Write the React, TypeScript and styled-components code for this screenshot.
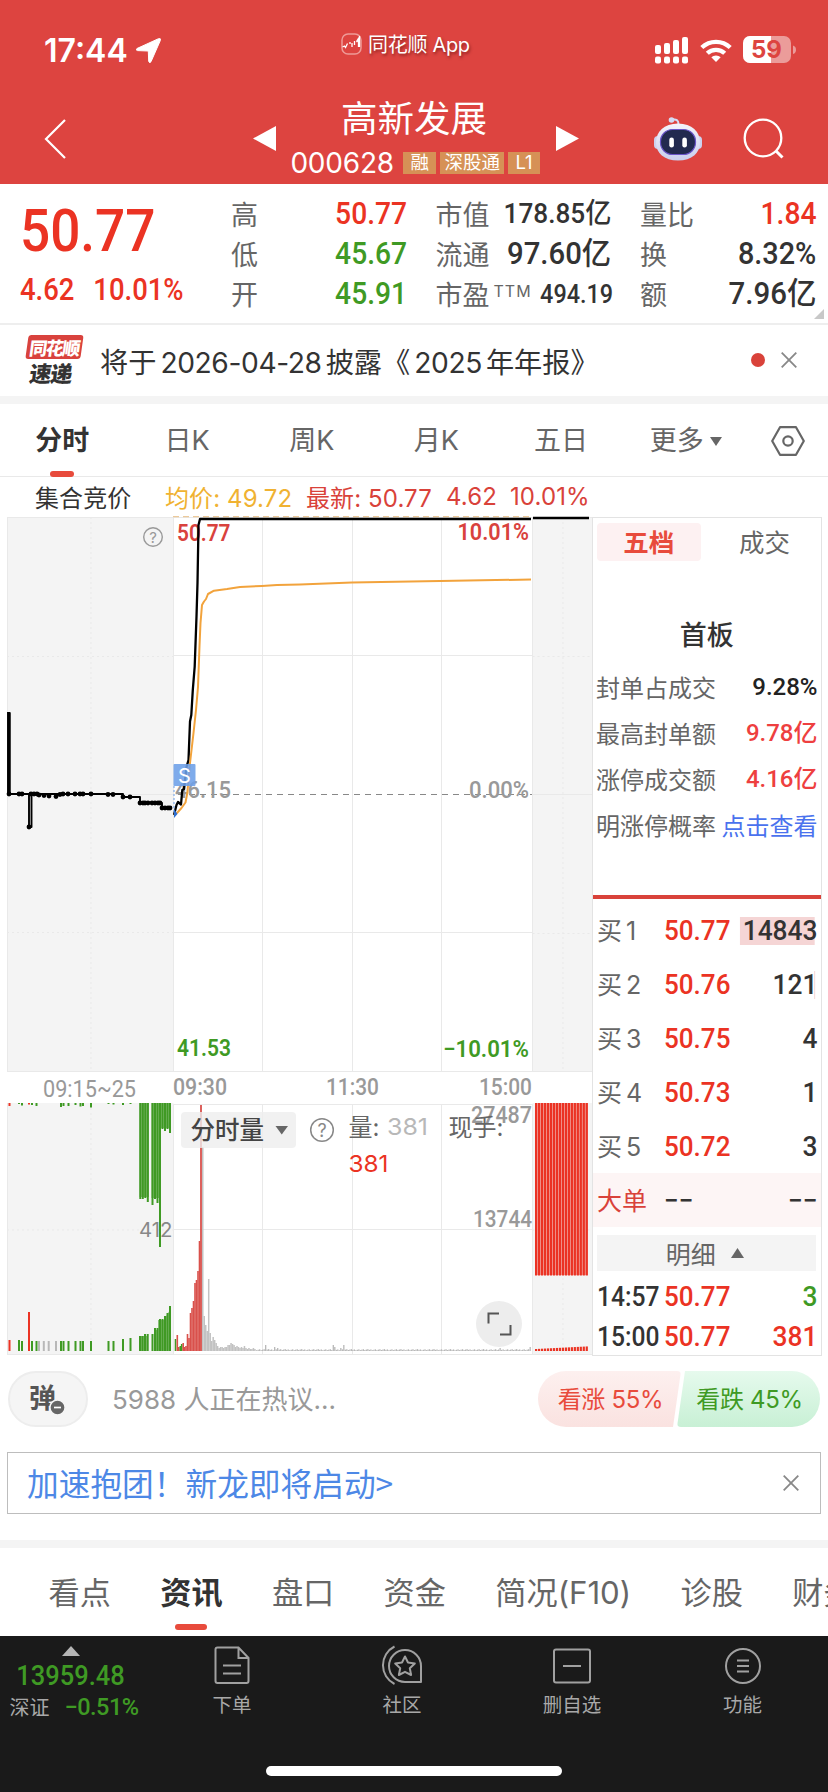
import React from 'react';
import styled, { createGlobalStyle } from 'styled-components';

const cjk = '"Noto Sans CJK SC", sans-serif';
const ui = `Inter, ${cjk}`;
const din = `Roboto, ${cjk}`;
const RED = '#eb3323';
const GREEN = '#3f9a24';
const INK = '#333333';
const MUTED = '#666666';

const GlobalStyle = createGlobalStyle`
  * { box-sizing: border-box; }
  body { margin: 0; background: #fff; }
  svg { display: block; flex: none; }
`;

const Page = styled.main`
  width: 828px;
  height: 1792px;
  overflow: hidden;
  display: flex;
  flex-direction: column;
  background: #fff;
  color: ${INK};
  font-family: ${ui};
  white-space: nowrap;
`;

/* ---------- header ---------- */
const Header = styled.header`
  height: 184px;
  flex: none;
  background: #dd4440;
  color: #fff;
`;
const StatusBar = styled.div`
  height: 100px;
  display: grid;
  grid-template-columns: 341px 1fr 174px;
`;
const StatusLeft = styled.div`
  display: flex;
  align-items: center;
  gap: 10px;
  padding-left: 44px;
`;
const Clock = styled.span`
  width: 82px;
  font-size: 32px;
  font-weight: 600;
  letter-spacing: 0;
`;
const StatusApp = styled.div`
  display: flex;
  align-items: center;
  gap: 6px;
  height: 87px;
  font-size: 20px;
  letter-spacing: -0.3px;
  text-shadow: 1px 2px 3px rgba(60, 0, 0, 0.5);
`;
const StatusRight = styled.div`
  display: flex;
  align-items: center;
  gap: 11px;
`;
const Nav = styled.div`
  height: 84px;
  display: flex;
  align-items: center;
`;
const NavSide = styled.div<{ $w: number }>`
  width: ${(p) => p.$w}px;
  height: 84px;
  padding-bottom: 7px;
  display: flex;
  align-items: center;
`;
const NavCenter = styled.div`
  width: 280px;
  height: 84px;
  padding-right: 2px;
  display: flex;
  flex-direction: column;
  align-items: center;
`;
const StockName = styled.h1`
  margin: 0;
  padding-right: 2px;
  font: 400 36.5px/34px ${cjk};
`;
const CodeRow = styled.div`
  display: flex;
  align-items: center;
  gap: 4px;
  height: 32px;
  margin-top: 13px;
`;
const Code = styled.span`
  width: 109px;
  font-size: 28px;
  letter-spacing: -0.2px;
`;
const Tag = styled.span`
  height: 22px;
  padding: 0 7px;
  background: #d69156;
  font: 400 18.5px/21px ${ui};
  &:nth-child(3) { padding: 0 4.5px; }
`;

/* ---------- quote ---------- */
const Quote = styled.section`
  height: 141px;
  flex: none;
  position: relative;
  display: grid;
  grid-template-columns: 182.5px 176px 176px 176px;
  column-gap: 28.5px;
  padding-left: 20px;
  border-bottom: 2px solid #eee;
`;
const PriceBlock = styled.div`
  color: ${RED};
  font-family: ${din};
  font-weight: 500;
  transform: scaleX(0.9);
  transform-origin: left;
`;
const Price = styled.div`
  margin-top: 12px;
  font-size: 59px;
  line-height: 70px;
`;
const Change = styled.div`
  display: flex;
  gap: 21px;
  margin-top: 7px;
  font-size: 30.5px;
  line-height: 34px;
`;
const StatCol = styled.div`
  padding-top: 10px;
`;
const Stat = styled.div`
  height: 40px;
  display: flex;
  justify-content: space-between;
  align-items: center;
  font-size: 27px;
  color: ${MUTED};
`;
const StatLabel = styled.span`
  font: 400 27px/40px ${cjk};
  sup { font: 400 16px/16px ${ui}; letter-spacing: 1px; margin-left: 4px; vertical-align: 8px; }
`;
const StatValue = styled.span<{ $c?: string; $s?: number; $k?: number }>`
  color: ${(p) => p.$c || INK};
  font: 500 ${(p) => p.$s || 31}px/40px ${din};
  transform: scaleX(${(p) => p.$k || 0.91});
  transform-origin: right;
`;
const Fold = styled.svg`
  position: absolute;
  right: 4px;
  bottom: 4px;
`;

/* ---------- notice ---------- */
const Notice = styled.section`
  height: 71px;
  flex: none;
  display: flex;
  align-items: center;
  padding: 0 31px 0 25px;
`;
const NoticeLogo = styled.div`
  width: 55px;
  height: 52px;
  transform: skewX(-8deg);
  text-align: center;
  font: 900 18px/24px ${cjk};
  span { display: block; height: 24px; border-radius: 3px; background: #d9423d; color: #fff; letter-spacing: -1.5px; }
  b { display: block; font-weight: 900; font-size: 22px; line-height: 27px; letter-spacing: -1px; }
`;
const NoticeText = styled.div`
  flex: 1;
  margin-left: 20px;
  font-size: 28.2px;
  i { font-style: normal; margin: 0 4px; letter-spacing: -0.4px; }
`;
const NoticeEnd = styled.div`
  display: flex;
  align-items: center;
  gap: 16px;
  padding-bottom: 2px;
`;
const Dot = styled.span`
  width: 14px;
  height: 14px;
  border-radius: 7px;
  background: #d9423a;
`;
const Band = styled.div`
  height: 8px;
  flex: none;
  background: #f4f4f4;
`;

/* ---------- period tabs ---------- */
const PeriodTabs = styled.nav`
  height: 73px;
  flex: none;
  display: grid;
  grid-template-columns: repeat(6, 124.7px) 1fr;
  border-bottom: 1px solid #e9e9e9;
`;
const PeriodTab = styled.div<{ $on?: boolean }>`
  position: relative;
  display: flex;
  align-items: center;
  justify-content: center;
  gap: 6px;
  padding-top: 1px;
  font: ${(p) => (p.$on ? 700 : 400)} 27px/72px ${ui};
  color: ${(p) => (p.$on ? INK : MUTED)};
`;
const Underline = styled.i<{ $w: number; $b: number }>`
  position: absolute;
  left: 50%;
  bottom: ${(p) => p.$b}px;
  width: ${(p) => p.$w}px;
  height: 6px;
  margin-left: ${(p) => -p.$w / 2}px;
  border-radius: 3px;
  background: #e84b3c;
`;
const Summary = styled.div`
  height: 39px;
  flex: none;
  display: flex;
  align-items: center;
  padding-left: 35px;
  font-size: 24px;
  color: #d9423a;
  letter-spacing: 0.1px;
`;
const SumItem = styled.span<{ $w: number; $c?: string }>`
  width: ${(p) => p.$w}px;
  color: ${(p) => p.$c || 'inherit'};
`;

/* ---------- chart + order book ---------- */
const Market = styled.section`
  height: 840px;
  flex: none;
  display: flex;
`;
const Book = styled.aside`
  width: 229.5px;
  height: 839px;
  margin-top: 1px;
  border: 1px solid #e3e3e3;
  font-family: ${din};
`;
const BookTabs = styled.div`
  display: flex;
  height: 38px;
  margin: 5px 4px 0;
`;
const BookTab = styled.div<{ $on?: boolean }>`
  flex: 1;
  width: 103px;
  border-radius: 4px;
  text-align: center;
  font: ${(p) => (p.$on ? 700 : 400)} 25.5px/36px ${cjk};
  color: ${(p) => (p.$on ? '#e84b3c' : MUTED)};
  background: ${(p) => (p.$on ? '#fdf1f2' : 'none')};
  & + & { margin-left: 12px; }
`;
const BoardTitle = styled.h2`
  margin: 51px 0 8px;
  text-align: center;
  font: 500 27px/44px ${cjk};
`;
const FactRow = styled.div`
  height: 46px;
  display: flex;
  justify-content: space-between;
  align-items: center;
  padding: 0 3px;
  font: 400 24px/44px ${cjk};
  color: ${MUTED};
`;
const FactValue = styled.b<{ $c?: string; $plain?: boolean }>`
  font: ${(p) => (p.$plain ? 400 : 500)} 24px/44px ${(p) => (p.$plain ? cjk : din)};
  color: ${(p) => p.$c || '#222'};
`;
const Divider = styled.div`
  height: 4px;
  margin: 47px 0 4px;
  background: #d9423a;
`;
const Level = styled.div<{ $h: number; $bg?: string }>`
  height: ${(p) => p.$h}px;
  display: grid;
  grid-template-columns: 67px 71px 1fr;
  align-items: center;
  padding: 2px 3px 0 4px;
  background: ${(p) => p.$bg || 'none'};
  font: 500 28px/30px ${din};
`;
const LevelName = styled.span<{ $c?: string }>`
  font: 400 25px/30px ${ui};
  word-spacing: -3px;
  color: ${(p) => p.$c || MUTED};
`;
const LevelTime = styled.span`
  transform: scaleX(0.88);
  transform-origin: left;
`;
const LevelPrice = styled.span<{ $c?: string }>`
  color: ${(p) => p.$c || RED};
  transform: scaleX(0.93);
  transform-origin: left;
`;
const LevelQty = styled.span<{ $c?: string; $bar?: number }>`
  text-align: right;
  color: ${(p) => p.$c || INK};
  background: linear-gradient(#f5d5d5, #f5d5d5) right 3px center / ${(p) => p.$bar || 0}px 28px no-repeat;
  transform: scaleX(0.94);
  transform-origin: right;
`;
const DetailBar = styled.div`
  height: 36px;
  margin: 8px 5px 5px 4px;
  padding-right: 3px;
  display: flex;
  align-items: center;
  justify-content: center;
  gap: 15px;
  background: #f4f4f4;
  color: ${MUTED};
  font: 400 25px/34px ${cjk};
`;

/* ---------- discussion ---------- */
const Talk = styled.section`
  height: 56px;
  flex: none;
  margin-top: 15px;
  padding: 0 8px;
  display: flex;
  align-items: center;
`;
const Danmu = styled.div`
  position: relative;
  width: 80px;
  height: 56px;
  border: 2px solid #ededed;
  border-radius: 28px;
  background: #f5f5f5;
  padding-left: 19px;
  font: 700 27px/48px ${cjk};
  color: #555;
  svg { position: absolute; left: 39px; top: 26px; }
`;
const TalkText = styled.div`
  flex: 1;
  padding: 0 0 3px 24px;
  font-size: 26px;
  color: #999;
`;
const Vote = styled.div<{ $up?: boolean }>`
  width: 143px;
  height: 56px;
  padding-left: 2px;
  text-align: center;
  font: 400 24px/57px ${ui};
  letter-spacing: -0.3px;
  color: ${(p) => (p.$up ? '#e84b3c' : GREEN)};
  background: ${(p) => (p.$up ? 'linear-gradient(#fdf0ef, #fae2e0)' : 'linear-gradient(#e6faed, #c8f0d5)')};
  border-radius: ${(p) => (p.$up ? '28px 4px 4px 28px' : '4px 28px 28px 4px')};
  clip-path: ${(p) =>
    p.$up ? 'polygon(0 0, 100% 0, calc(100% - 8px) 100%, 0 100%)' : 'polygon(8px 0, 100% 0, 100% 100%, 0 100%)'};
  & + & { margin-left: -4px; }
`;
const Promo = styled.section`
  height: 62px;
  flex: none;
  margin: 25px 7px 26px;
  padding: 0 21px 0 19px;
  border: 1px solid #bdbdbd;
  display: flex;
  align-items: center;
  justify-content: space-between;
  font: 400 31.7px/58px ${cjk};
  color: #4d88e6;
  span { height: 61px; }
`;
const InfoTabs = styled.nav`
  height: 88px;
  flex: none;
  display: flex;
  gap: 49.3px;
  padding-left: 48.5px;
`;
const InfoTab = styled.div<{ $on?: boolean }>`
  position: relative;
  flex: none;
  font: ${(p) => (p.$on ? 700 : 400)} 31.2px/88px ${ui};
  padding-top: 1px;
  height: 88px;
  color: ${(p) => (p.$on ? INK : MUTED)};
`;

/* ---------- bottom bar ---------- */
const Bottom = styled.footer`
  height: 156px;
  flex: none;
  background: #1a1a1a;
  color: #a8a8a8;
`;
const Actions = styled.div`
  height: 130px;
  display: grid;
  grid-template-columns: 147px 170px 170px 170px 171px;
`;
const Index = styled.div`
  display: flex;
  flex-direction: column;
  align-items: center;
  padding: 10px 6px 0 0;
  color: ${GREEN};
  font-family: ${din};
`;
const IndexValue = styled.div`
  font: 500 28px/40px ${din};
  transform: scaleX(0.91);
`;
const IndexChange = styled.div`
  display: flex;
  align-items: center;
  gap: 15px;
  margin: -3px 0 0 7px;
  font: 500 23.5px/28px ${din};
  letter-spacing: -0.5px;
  span { font: 400 20px/28px ${cjk}; letter-spacing: 0; color: #a8a8a8; }
`;
const Action = styled.div`
  display: flex;
  flex-direction: column;
  align-items: center;
  padding-top: 9px;
  font: 400 19.5px/28px ${cjk};
  svg { margin-bottom: 5px; }
`;
const HomeBar = styled.div`
  width: 296px;
  height: 10px;
  margin: 0 auto;
  border-radius: 5px;
  background: #fff;
`;

/* ---------- small drawings ---------- */
const Cross = ({ size = 16 }: { size?: number }) => (
  <svg width={size} height={size} viewBox="0 0 16 16" stroke="#888" strokeWidth="1.8">
    <path d="M.7.7l14.6 14.6M15.3.7L.7 15.3" />
  </svg>
);
const Caret = ({ up, w, h, c }: { up?: boolean; w: number; h: number; c: string }) => (
  <svg width={w} height={h} viewBox="0 0 10 10" preserveAspectRatio="none">
    <path d={up ? 'M5 0l5 10H0z' : 'M0 0h10L5 10z'} fill={c} />
  </svg>
);
const Robot = () => (
  <svg width="48" height="46" viewBox="0 0 48 46">
    <defs>
      <linearGradient id="shell" x1="0" y1="0" x2="0" y2="1">
        <stop offset="0" stopColor="#f4f4fb" />
        <stop offset="1" stopColor="#c9cfee" />
      </linearGradient>
    </defs>
    <path d="M24.500 8C24.500 4 22 3 19 3.500" fill="none" stroke="#d5daf3" strokeWidth="2" />
    <circle cx="17.500" cy="4" r="2.800" fill="#d5daf3" />
    <rect x="0" y="20" width="8" height="13" rx="4" fill="#cdd2ef" />
    <rect x="40" y="20" width="8" height="13" rx="4" fill="#cdd2ef" />
    <path d="M24 7.500C38 7.500 46 16 46 26.500S38 44.500 24 44.500 2 37 2 26.500 10 7.500 24 7.500z" fill="url(#shell)" />
    <rect x="6.500" y="13.500" width="35" height="25" rx="12" fill="#222a4f" stroke="#6a55c8" strokeWidth="1.200" />
    <rect x="15.300" y="21.500" width="4.600" height="10" rx="2.300" fill="#fff" />
    <rect x="28.300" y="21.500" width="4.600" height="10" rx="2.300" fill="#fff" />
  </svg>
);

/* ---------- chart ---------- */
const BASE = 1351;
const openBars: [number, number, string][] = [
  [175.500, 12, GREEN], [177.300, 16, RED], [178.800, 4, RED], [180.300, 5, GREEN], [181.700, 7, GREEN],
  [183.200, 8, RED], [184.600, 4, RED], [186, 5, RED], [187.500, 17, RED], [189, 13, RED], [190.500, 38, RED],
  [192, 43, RED], [193.500, 50, RED], [195, 68, RED], [196.500, 71, RED], [198, 80, RED], [199.500, 110, RED],
];
const tailBars = [
  204, 35, 26, 20, 72, 18, 10, 14, 11, 8, 5, 3, 4, 4, 3, 4, 4, 6, 6, 8, 7, 6, 4, 5, 4, 3, 4, 3, 5, 3, 2, 3, 2, 2, 3, 2,
];
const lateBars = Array.from({ length: 183 }, (_, i) => {
  const spikes: Record<number, number> = { 6: 6, 12: 4, 14: 3, 51: 6, 52: 4, 56: 3, 58: 6, 162: 3, 182: 4 };
  return spikes[i] || 0.8 + ((i * 37) % 11) / 9;
});
const preBottom: [number, number, string][] = [
  [9.500, 11, RED], [19, 11, GREEN], [22, 10, GREEN], [29, 39, RED], [32, 10, GREEN], [36.500, 10, GREEN], [39, 10, '#b8b8b8'],
  [43.800, 10, '#b8b8b8'], [48.700, 10, '#b8b8b8'], [56, 10, '#b8b8b8'], [61, 10, GREEN], [63.500, 10, GREEN], [68.500, 10, GREEN],
  [75.500, 10, GREEN], [80.500, 10, GREEN], [83, 10, GREEN], [91, 10, GREEN], [108.500, 10, GREEN], [113.500, 10, GREEN],
  [123, 12, GREEN], [130.500, 13, GREEN], [140, 15, GREEN], [142.500, 15, GREEN], [145, 17, GREEN], [147.700, 17, GREEN],
  [152.500, 17, GREEN], [155, 23, GREEN], [157.500, 23, GREEN], [160, 32, GREEN], [162.500, 32, GREEN], [165, 35, GREEN],
  [167.500, 38, GREEN], [170, 45, GREEN],
];
const preTop: [number, number, string][] = [
  [9.500, 3, RED], [19, 1, GREEN], [22, 2.500, GREEN], [29, 1.500, RED], [32, 2, GREEN], [36.500, 3, GREEN], [61, 4, GREEN],
  [63.500, 3, GREEN], [68.500, 3, GREEN], [75.500, 2, GREEN], [80.500, 3.500, GREEN], [83, 3, GREEN], [91, 4.500, GREEN],
  [108.500, 1, GREEN], [113.500, 1.500, GREEN], [123, 2, GREEN], [130.500, 1, GREEN],
  [140.300, 96, GREEN], [142.800, 96, GREEN], [145.300, 95, GREEN], [147.800, 99, GREEN], [152.500, 102, GREEN],
  [155, 96, GREEN], [157.500, 100, GREEN], [160, 144, GREEN], [162.500, 26, GREEN], [165, 28, GREEN], [167.500, 26, GREEN], [170, 30, GREEN],
];
const dots: [number, number][] = [
  [9, 794], [19, 794], [22, 794], [31, 794], [34, 794], [37, 794], [39, 795], [44, 795.500], [49, 796], [56, 796.500], [60, 794.500],
  [63, 794], [68, 794], [75, 794], [80, 794], [83, 794], [91, 794], [108, 794.500], [113, 794.500], [123, 797], [130, 797],
  [140, 803], [143, 803], [145, 803], [148, 803], [152, 803], [155, 803], [158, 803], [160, 803], [162, 808], [165, 808], [168, 808], [170, 808],
  [29, 827],
];

type LabelProps = { x: number; y: number; w: number; s?: number; c?: string; end?: boolean; f?: string; b?: number; children: string };
const Label = ({ x, y, w, s = 23, c = '#999', end, f = din, b = 500, children }: LabelProps) => (
  <text x={x} y={y} textLength={w} lengthAdjust="spacingAndGlyphs" fontSize={s} fill={c} fontFamily={f} fontWeight={b} textAnchor={end ? 'end' : 'start'}>
    {children}
  </text>
);

const Chart = () => (
  <svg width="592" height="840" viewBox="0 516 592 840">
    <g fill="#f4f4f4">
      <rect x="7" y="517" width="166.500" height="554" />
      <rect x="532.500" y="517" width="59.500" height="554" />
      <rect x="7" y="1103" width="166.500" height="251" />
      <rect x="532.500" y="1103" width="59.500" height="251" />
    </g>
    <g stroke="#e9e9e9" strokeWidth="1" fill="none">
      <path d="M7 517.500H592M7 1071.500H592M173 1104.500H532M7 1354.500H592M7.500 517V1071M7.500 1103V1354" />
      <path d="M173.500 517V1071M262.500 517V1071M352.500 517V1071M441.500 517V1071M532.500 517V1071" />
      <path d="M173.500 1104V1354M262.500 1104V1354M352.500 1104V1354M441.500 1104V1354M532.500 1104V1354" />
      <path d="M173.500 655.500H532.500M173.500 932.500H532.500M173.500 1229.500H532.500M7 794.500H173M532.500 794.500H592" />
      <path strokeDasharray="2 3" d="M7 656.500H173M7 932.500H173M532.500 656.500H592M532.500 933.500H592M91 517V1071M563 517V1071M7 1230H173M532.500 1230H592M91 1103V1354M563 1103V1354" />
    </g>
    <path d="M173 516.500H530" stroke="#ecc99a" strokeWidth="1.500" strokeDasharray="6 4" />
    <path d="M178 794.500H532" stroke="#888" strokeWidth="1.200" strokeDasharray="6 5" />

    <Label x={177} y={540.500} w={53.500} c="#d9423d" b={600}>50.77</Label>
    <Label x={529} y={540} w={71.500} c="#d9423d" b={600} end>10.01%</Label>
    <Label x={175} y={798} w={56}>46.15</Label>
    <Label x={529} y={798} w={60} end>0.00%</Label>
    <Label x={177} y={1056} w={54} c={GREEN} b={600}>41.53</Label>
    <Label x={529} y={1056.500} w={86} c={GREEN} b={600} end>−10.01%</Label>

    <g stroke="#000" fill="none" strokeWidth="2.300" strokeLinejoin="round">
      <path d="M8 712V794M8 713H9.800V794H29V827H31.500V794H123V797H140V803H162V808H172" strokeWidth="1.900" />
      <path d="M174 815L176.500 805 178 802 181 804.500 182.300 790 184 789 186.500 767 188.500 760 190 721.500 191.300 715 192.800 690 194.700 666.500 196.500 616.500 197.500 583 198.500 525 200 519H531" />
      <path d="M533 518H589" />
    </g>
    {dots.map(([x, y], i) => <circle key={i} cx={x} cy={y} r="2.400" />)}
    <path d="M174 815L177 813 181.500 808 185.500 802.500 187.300 793 190 763 193.500 733 196 710 198 687 199.500 646 200.500 623 202 605 204 601.500 206 599 208 594 214 590.700 227 589 240 587 262 586 277 585 300 584.500 352 582.500 440 581 531 579.500" fill="none" stroke="#f2a33c" strokeWidth="2" strokeLinejoin="round" />
    <rect x="173.500" y="764" width="22" height="22" rx="1" fill="#6c9fe8" fillOpacity=".88" />
    <text x="184.500" y="783" fontSize="20" fill="#fff" textAnchor="middle" fontFamily={ui}>S</text>
    <path d="M174 786V812" stroke="#6c9fe8" strokeDasharray="2 2" />
    <path d="M174 809l3.500 5-3.500 4z" fill="#2f6fd0" />
    <circle cx="153" cy="537" r="9.300" fill="none" stroke="#999" strokeWidth="1.400" />
    <text x="153" y="542.500" fontSize="15" fill="#999" textAnchor="middle" fontFamily={ui}>?</text>

    <Label x={43} y={1096.500} w={93} b={400}>09:15~25</Label>
    <Label x={173} y={1095} w={54}>09:30</Label>
    <Label x={326} y={1095} w={53}>11:30</Label>
    <Label x={532} y={1095} w={53} end>15:00</Label>

    <Label x={139} y={1236.500} w={33.500} s={20} c="#888" f={ui} b={400}>412</Label>
    {preTop.map(([x, h, c], i) => <rect key={i} x={x - 1} y={1103} width="2" height={h} fill={c} />)}
    {preBottom.map(([x, h, c], i) => <rect key={i} x={x - 1} y={BASE - h} width="2" height={h} fill={c} />)}
    <path d="M139.500 1103H149V1197H139.500zM151.500 1103H159V1198H151.500zM161 1103H171V1128H161z" fill={GREEN} fillOpacity=".6" />
    <path d="M139.500 1351V1336H148V1351zM154 1351V1330H158V1320H164L171 1308V1351z" fill={GREEN} fillOpacity=".6" />
    {openBars.map(([x, h, c], i) => <rect key={i} x={x - 0.800} y={BASE - h} width="1.600" height={h} fill={c === RED ? '#d9504b' : c} />)}
    {tailBars.map((h, i) => <rect key={i} x={202 + i * 1.490} y={BASE - h} width="1.500" height={h} fill="#c2c2c2" />)}
    {lateBars.map((h, i) => <rect key={i} x={256 + i * 1.503} y={BASE - h} width="1.300" height={h} fill="#b8b8b8" />)}
    <path d="M201 1105V1351" stroke="#d9504b" strokeWidth="1.800" />
    {Array.from({ length: 18 }, (_, i) => (
      <g key={i} fill={RED}>
        <rect x={535 + i * 2.980} y="1103" width="2.200" height="172.500" />
        <rect x={535 + i * 2.980} y={1349 - i * 0.150} width="2.200" height={2 + i * 0.150} />
      </g>
    ))}
    <rect x="535" y="1103" width="53" height="172" fill={RED} fillOpacity=".4" />

    <Label x={532} y={1123} w={61} end>27487</Label>
    <Label x={532} y={1227} w={59} end>13744</Label>
    <rect x="181" y="1112" width="115" height="36" rx="4" fill="#ededed" fillOpacity=".8" />
    <text x="190.500" y="1138.500" fontSize="24.500" fontWeight="500" fill="#444" fontFamily={cjk}>分时量</text>
    <path d="M275.500 1126h12.500l-6.250 8.500z" fill={MUTED} />
    <circle cx="322" cy="1130" r="11.300" fill="none" stroke="#888" strokeWidth="1.500" />
    <text x="322" y="1136.500" fontSize="18" fill="#888" textAnchor="middle" fontFamily={ui}>?</text>
    <text x="348.500" y="1136" fontSize="24" fill={MUTED} fontFamily={ui}>量:</text>
    <Label x={387} y={1135} w={41} s={23.500} c="#b8b8b8" f={ui} b={400}>381</Label>
    <text x="448.500" y="1136" fontSize="24" fill={MUTED} fontFamily={ui}>现手:</text>
    <Label x={348.500} y={1172} w={40} s={23.500} c={RED} f={ui} b={400}>381</Label>
    <circle cx="499" cy="1324" r="23" fill="#ededed" />
    <path d="M488.500 1323.500V1313.500H499M500 1334.500H510.500V1325" fill="none" stroke="#555" strokeWidth="2" />
  </svg>
);

const levels: [string, string, string, number][] = [
  ['买 1', '50.77', '14843', 80],
  ['买 2', '50.76', '121', 1],
  ['买 3', '50.75', '4', 0],
  ['买 4', '50.73', '1', 0],
  ['买 5', '50.72', '3', 0],
];

export default function App() {
  return (
    <Page>
      <GlobalStyle />
      <Header>
        <StatusBar>
          <StatusLeft>
            <Clock>17:44</Clock>
            <svg width="25" height="25" viewBox="0 0 25 25"><path d="M1 10.500L22.500.700Q25.200 0 24.300 2.500L15 23.700Q13.500 26 12.700 23.300L12.300 13 1.500 12.600Q-.8 12 1 10.500z" fill="#fff" stroke="#fff" strokeWidth="1" strokeLinejoin="round" /></svg>
          </StatusLeft>
          <StatusApp>
            <svg width="21" height="22" viewBox="0 0 21 22" fill="none">
              <rect x="1" y="1" width="19" height="20" rx="6" stroke="#ee9a97" strokeWidth="1.500" />
              <path d="M1.500 14l2-1 1 1.500 2-4M9 9v2M11 10v4M13.500 8v4M15.500 9l2-2v7M18.500 3v11M18 4.500l-2.500 4" stroke="#fff" strokeWidth="1.300" />
            </svg>
            <span>同花顺 App</span>
          </StatusApp>
          <StatusRight>
            <svg width="35" height="27" viewBox="0 0 35 27" fill="#fff">
              {[8, 6, 3, 0].map((y, i) => (
                <g key={i}>
                  <rect x={1 + i * 9} y={y} width="6" height={17 - y} rx="2" />
                  <rect x={1 + i * 9} y="19.500" width="6" height="7" rx="2" />
                </g>
              ))}
            </svg>
            <svg width="32" height="25" viewBox="0 0 32 25" fill="none" stroke="#fff" strokeWidth="4.300">
              <path d="M1.800 9.500a20.500 20.500 0 0 1 28.400 0" />
              <path d="M7.300 15.300a12.500 12.500 0 0 1 17.400 0" />
              <path d="M11.300 19.300a6.800 6.800 0 0 1 9.400 0L16 24z" fill="#fff" stroke="none" />
            </svg>
            <svg width="54" height="28" viewBox="0 0 54 28">
              <rect x="0" y="0" width="48" height="27" rx="7" fill="#eb9c9a" />
              <path d="M7 0H28V27H7A7 7 0 0 1 0 20V7A7 7 0 0 1 7 0z" fill="#fff" />
              <path d="M50 9.500q3 1 3 4.300t-3 4.300z" fill="#eb9c9a" />
              <text x="23.500" y="22" fontSize="24" fontWeight="700" textAnchor="middle" fill="#dd4440" fontFamily="Inter, sans-serif">59</text>
            </svg>
          </StatusRight>
        </StatusBar>
        <Nav>
          <NavSide $w={276}>
            <svg width="22" height="40" viewBox="0 0 22 40" style={{ marginLeft: 44, marginRight: 187 }}><path d="M21 1L2 20l19 19" fill="none" stroke="#fff" strokeWidth="2.200" /></svg>
            <svg width="23" height="25" viewBox="0 0 23 25"><path d="M0 12.500L23 0v25z" fill="#fff" /></svg>
          </NavSide>
          <NavCenter>
            <StockName>高新发展</StockName>
            <CodeRow>
              <Code>000628</Code>
              <Tag>融</Tag>
              <Tag>深股通</Tag>
              <Tag>L1</Tag>
            </CodeRow>
          </NavCenter>
          <NavSide $w={272}>
            <svg width="23" height="25" viewBox="0 0 23 25" style={{ marginRight: 75 }}><path d="M23 12.500L0 0v25z" fill="#fff" /></svg>
            <Robot />
            <svg width="42" height="42" viewBox="0 0 42 42" style={{ marginLeft: 41 }} fill="none" stroke="#fff" strokeWidth="2.300">
              <circle cx="20" cy="20" r="18.300" /><path d="M33 33l6.500 6.500" strokeWidth="3" />
            </svg>
          </NavSide>
        </Nav>
      </Header>

      <Quote>
        <PriceBlock>
          <Price>50.77</Price>
          <Change><span>4.62</span><span>10.01%</span></Change>
        </PriceBlock>
        <StatCol>
          <Stat><StatLabel>高</StatLabel><StatValue $c={RED}>50.77</StatValue></Stat>
          <Stat><StatLabel>低</StatLabel><StatValue $c={GREEN}>45.67</StatValue></Stat>
          <Stat><StatLabel>开</StatLabel><StatValue $c={GREEN}>45.91</StatValue></Stat>
        </StatCol>
        <StatCol>
          <Stat><StatLabel>市值</StatLabel><StatValue $s={28} $k={0.935}>178.85亿</StatValue></Stat>
          <Stat><StatLabel>流通</StatLabel><StatValue $k={0.945}>97.60亿</StatValue></Stat>
          <Stat><StatLabel>市盈<sup>TTM</sup></StatLabel><StatValue $s={26} $k={0.9}>494.19</StatValue></Stat>
        </StatCol>
        <StatCol>
          <Stat><StatLabel>量比</StatLabel><StatValue $c={RED}>1.84</StatValue></Stat>
          <Stat><StatLabel>换</StatLabel><StatValue $k={0.93}>8.32%</StatValue></Stat>
          <Stat><StatLabel>额</StatLabel><StatValue $k={0.95}>7.96亿</StatValue></Stat>
        </StatCol>
        <Fold width="10" height="10" viewBox="0 0 10 10"><path d="M10 0v10H0z" fill="#c8c8c8" /></Fold>
      </Quote>

      <Notice>
        <NoticeLogo><span>同花顺</span><b>速递</b></NoticeLogo>
        <NoticeText>将于<i>2026-04-28</i>披露《<i>2025</i>年年报》</NoticeText>
        <NoticeEnd><Dot /><Cross /></NoticeEnd>
      </Notice>
      <Band />

      <PeriodTabs>
        <PeriodTab $on>分时<Underline $w={24} $b={0} /></PeriodTab>
        <PeriodTab>日K</PeriodTab>
        <PeriodTab>周K</PeriodTab>
        <PeriodTab>月K</PeriodTab>
        <PeriodTab>五日</PeriodTab>
        <PeriodTab>更多<Caret w={12} h={9} c={MUTED} /></PeriodTab>
        <PeriodTab>
          <svg width="34" height="30" viewBox="0 0 34 30" fill="none" stroke="#666" strokeWidth="2.200">
            <path d="M9 1.200H25L32.800 15 25 28.800H9L1.200 15z" strokeLinejoin="round" /><circle cx="17" cy="15" r="4.700" />
          </svg>
        </PeriodTab>
      </PeriodTabs>
      <Summary>
        <SumItem $w={130} $c={INK}>集合竞价</SumItem>
        <SumItem $w={141} $c="#f0b232">均价: 49.72</SumItem>
        <SumItem $w={140}>最新: 50.77</SumItem>
        <SumItem $w={64}>4.62</SumItem>
        <SumItem $w={90}>10.01%</SumItem>
      </Summary>

      <Market>
        <Chart />
        <Book>
          <BookTabs><BookTab $on>五档</BookTab><BookTab>成交</BookTab></BookTabs>
          <BoardTitle>首板</BoardTitle>
          <FactRow>封单占成交<FactValue>9.28%</FactValue></FactRow>
          <FactRow>最高封单额<FactValue $c="#ee3f3f">9.78亿</FactValue></FactRow>
          <FactRow>涨停成交额<FactValue $c="#ee3f3f">4.16亿</FactValue></FactRow>
          <FactRow>明涨停概率<FactValue $plain $c="#4a72ee">点击查看</FactValue></FactRow>
          <Divider />
          {levels.map(([name, price, qty, bar]) => (
            <Level key={name} $h={54}>
              <LevelName>{name}</LevelName>
              <LevelPrice>{price}</LevelPrice>
              <LevelQty $bar={bar}>{qty}</LevelQty>
            </Level>
          ))}
          <Level $h={54} $bg="#fdf5f5">
            <LevelName $c="#d9423a">大单</LevelName>
            <LevelPrice $c={INK}>−−</LevelPrice>
            <LevelQty>−−</LevelQty>
          </Level>
          <DetailBar>明细<Caret up w={13} h={10} c={MUTED} /></DetailBar>
          <Level $h={40}><LevelTime>14:57</LevelTime><LevelPrice>50.77</LevelPrice><LevelQty $c={GREEN}>3</LevelQty></Level>
          <Level $h={40}><LevelTime>15:00</LevelTime><LevelPrice>50.77</LevelPrice><LevelQty $c={RED}>381</LevelQty></Level>
        </Book>
      </Market>

      <Talk>
        <Danmu>
          弹
          <svg width="17" height="17" viewBox="0 0 17 17"><circle cx="8.500" cy="8.500" r="7.600" fill="#666" stroke="#f5f5f5" strokeWidth="1.500" /><path d="M5 8.500h7" stroke="#fff" strokeWidth="1.700" /></svg>
        </Danmu>
        <TalkText>5988 人正在热议...</TalkText>
        <Vote $up>看涨 55%</Vote>
        <Vote>看跌 45%</Vote>
      </Talk>
      <Promo><span>加速抱团！新龙即将启动&gt;</span><Cross /></Promo>
      <Band />
      <InfoTabs>
        <InfoTab>看点</InfoTab>
        <InfoTab $on>资讯<Underline $w={32} $b={6} /></InfoTab>
        <InfoTab>盘口</InfoTab>
        <InfoTab>资金</InfoTab>
        <InfoTab>简况(F10)</InfoTab>
        <InfoTab>诊股</InfoTab>
        <InfoTab>财务</InfoTab>
      </InfoTabs>

      <Bottom>
        <Actions>
          <Index>
            <Caret up w={18} h={10} c="#b5b5b5" />
            <IndexValue>13959.48</IndexValue>
            <IndexChange><span>深证</span>−0.51%</IndexChange>
          </Index>
          <Action>
            <svg width="36" height="40" viewBox="0 0 36 40" fill="none" stroke="#a0a0a0" strokeWidth="2">
              <path d="M24.500 2.500H3.500Q1.500 2.500 1.500 4.500V36Q1.500 38 3.500 38H32.500Q34.500 38 34.500 36V13zM24.500 2.500V13H34.500" /><path d="M9 20.500h18M9 28.500h18" />
            </svg>
            下单
          </Action>
          <Action>
            <svg width="42" height="40" viewBox="0 0 42 40" fill="none" stroke="#a0a0a0" strokeWidth="2">
              <path d="M40 37H24A16 16 0 1 1 40 21z" strokeLinejoin="round" />
              <path d="M13.500 1.500A21 21 0 0 0 13.500 39" />
              <path d="M24 11.500l3 6 6.800 1-5 4.700 1.300 6.800-6.100-3.200-6.100 3.200 1.300-6.800-5-4.700 6.800-1z" strokeLinejoin="round" />
            </svg>
            社区
          </Action>
          <Action>
            <svg width="38" height="40" viewBox="0 0 38 40" fill="none" stroke="#a0a0a0" strokeWidth="2">
              <rect x="1" y="4.500" width="36" height="33" rx="2" /><path d="M10 21h18" />
            </svg>
            删自选
          </Action>
          <Action>
            <svg width="38" height="40" viewBox="0 0 38 40" fill="none" stroke="#a0a0a0" strokeWidth="2">
              <circle cx="19" cy="21" r="17" /><path d="M13 15.500h12M13 21h12M13 26.500h12" />
            </svg>
            功能
          </Action>
        </Actions>
        <HomeBar />
      </Bottom>
    </Page>
  );
}
